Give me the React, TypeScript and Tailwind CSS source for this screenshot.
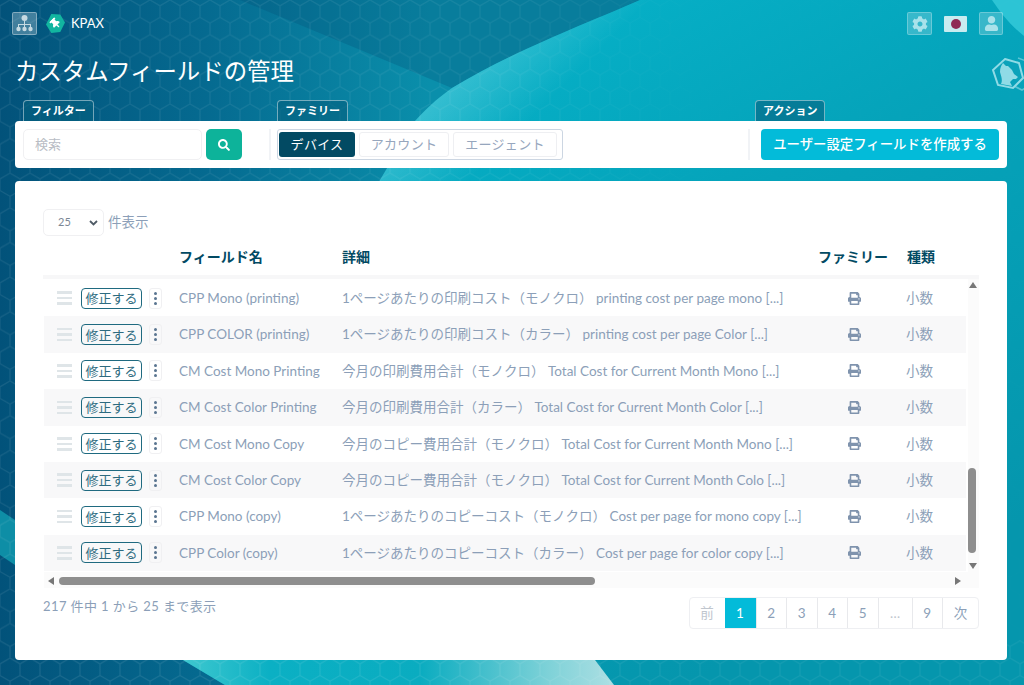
import { FaCog, FaPrint, FaSearch, FaThumbtack, FaUser } from "react-icons/fa"

type Field = {
  name: string
  detail: string
}

const fields: Field[] = [
  { name: "CPP Mono (printing)", detail: "1ページあたりの印刷コスト（モノクロ） printing cost per page mono [...]" },
  { name: "CPP COLOR (printing)", detail: "1ページあたりの印刷コスト（カラー） printing cost per page Color [...]" },
  { name: "CM Cost Mono Printing", detail: "今月の印刷費用合計（モノクロ） Total Cost for Current Month Mono [...]" },
  { name: "CM Cost Color Printing", detail: "今月の印刷費用合計（カラー） Total Cost for Current Month Color [...]" },
  { name: "CM Cost Mono Copy", detail: "今月のコピー費用合計（モノクロ） Total Cost for Current Month Mono [...]" },
  { name: "CM Cost Color Copy", detail: "今月のコピー費用合計（モノクロ） Total Cost for Current Month Colo [...]" },
  { name: "CPP Mono (copy)", detail: "1ページあたりのコピーコスト（モノクロ） Cost per page for mono copy [...]" },
  { name: "CPP Color (copy)", detail: "1ページあたりのコピーコスト（カラー） Cost per page for color copy [...]" },
]

const pages = ["1", "2", "3", "4", "5", "…", "9"]

const curve = "M640 0C590 22 515 50 452 88C435 100 425 110 415 121L380 180L183 660L225 685H1024V0Z"

function Background() {
  return (
    <svg className="absolute inset-0 h-full w-full" viewBox="0 0 1024 685" preserveAspectRatio="none">
      <defs>
        <linearGradient id="base" x1="0" y1="0" x2="1" y2="0">
          <stop offset="0" stopColor="#02527a" />
          <stop offset="0.2" stopColor="#056a90" />
          <stop offset="0.42" stopColor="#0a8fab" />
        </linearGradient>
        <linearGradient id="teal" x1="0" y1="0" x2="0.6" y2="1">
          <stop offset="0" stopColor="#06b9d0" />
          <stop offset="0.5" stopColor="#05a3ba" />
          <stop offset="1" stopColor="#0596ad" />
        </linearGradient>
        <linearGradient id="edge" gradientUnits="userSpaceOnUse" x1="480" y1="50" x2="540" y2="110">
          <stop offset="0" stopColor="#ffffff" stopOpacity="0.2" />
          <stop offset="1" stopColor="#ffffff" stopOpacity="0" />
        </linearGradient>
        <linearGradient id="strip" x1="0" y1="0" x2="1" y2="0">
          <stop offset="0" stopColor="#3fc8cf" />
          <stop offset="0.2" stopColor="#0bb0c4" />
          <stop offset="0.55" stopColor="#0aacc0" />
          <stop offset="0.85" stopColor="#7fd2d8" />
          <stop offset="1" stopColor="#addfe3" />
        </linearGradient>
        <linearGradient id="hexFade" x1="0" y1="0" x2="1" y2="0">
          <stop offset="0" stopColor="#fff" stopOpacity="0.8" />
          <stop offset="0.5" stopColor="#fff" stopOpacity="0.6" />
          <stop offset="0.68" stopColor="#fff" stopOpacity="0.1" />
          <stop offset="1" stopColor="#fff" stopOpacity="0.1" />
        </linearGradient>
        <mask id="hexMask">
          <rect width="1024" height="685" fill="url(#hexFade)" />
          <rect y="640" width="1024" height="45" fill="#fff" fillOpacity="0.6" />
        </mask>
        <pattern id="hex" width="20" height="34.64" patternUnits="userSpaceOnUse">
          <path d="M10 0L20 5.770V17.320L10 23.090L0 17.320V5.770ZM10 23.090V34.640" fill="none" stroke="#ffffff" strokeOpacity="0.1" strokeWidth="1.3" />
        </pattern>
      </defs>
      <rect width="1024" height="685" fill="url(#base)" />
      <path d="M240 0H640C590 22 515 50 452 88Z" fill="#024f75" fillOpacity="0.28" />
      <path d="M0 510L15 520V565L0 555Z" fill="#0e8ea6" />
      <path d={curve} fill="url(#teal)" />
      <path d={curve} fill="url(#edge)" />
      <path d="M183 660L225 685H614L595 660Z" fill="url(#strip)" />
      <path d="M992 0H1024V36C1010 25 1000 12 992 0Z" fill="#2cc4d5" />
      <rect width="1024" height="685" fill="url(#hex)" mask="url(#hexMask)" />

      {/* cat badge, cut off by the window edge */}
      <g fill="none" stroke="#8fdbe6" strokeWidth="1.6">
        <path d="M1018 58L1034 64L1037 82L1022 90L1010 84" strokeOpacity="0.6" />
        <path d="M1005 59L1019 63L1023 78L1013 88L998 85L993 70Z" fill="#0aa2ba" strokeWidth="2" />
      </g>
      <path
        d="M1003 63L1006 66L1008 66L1012 70L1014 74L1018 77L1016 79L1013 79L1010 82L1012 86L1001 84C1003 80 1001 76 1000 72C1000 68 1001 66 1003 63Z"
        fill="#8fdbe6"
      />
    </svg>
  )
}

function GroupLabel({ children }: { children: string }) {
  return (
    <span className="block h-[21px] w-fit rounded-t-[4px] border border-b-0 border-white/45 bg-[#05607f]/60 px-[7px] text-[11px] leading-[20px] font-bold text-white">
      {children}
    </span>
  )
}

function Row({ field, striped }: { field: Field; striped: boolean }) {
  return (
    <div className={`flex h-[36.4px] items-center text-[13.5px] text-[#8c9fb8] ${striped ? "bg-[#f8f8f9]" : "bg-white"}`}>
      <div className="ml-[13px] flex w-[15px] flex-col gap-[3px]">
        <span className="h-[2.5px] bg-[#dfe5e8]" />
        <span className="h-[2.5px] bg-[#dfe5e8]" />
        <span className="h-[2.5px] bg-[#dfe5e8]" />
      </div>
      <button className="ml-[9px] h-[21px] w-[61px] rounded-[4px] border border-[#1f6a80] text-center text-[13px] leading-[18px] text-[#2d6b80]">
        修正する
      </button>
      <span className="ml-[7px] flex h-[21px] w-[13px] flex-col items-center justify-center gap-[2px] rounded-[3px] border border-[#f0f0f2]">
        <i className="size-[3px] rounded-full bg-[#5a7590]" />
        <i className="size-[3px] rounded-full bg-[#5a7590]" />
        <i className="size-[3px] rounded-full bg-[#5a7590]" />
      </span>
      <span className="ml-[17px] w-[163px] whitespace-nowrap">{field.name}</span>
      <span className="w-[465px] whitespace-nowrap">{field.detail}</span>
      <span className="flex w-[94px] justify-center">
        <FaPrint size={13} className="text-[#7f93ad]" />
      </span>
      <span className="ml-[5px]">小数</span>
    </div>
  )
}

export default function App() {
  return (
    <div className="relative h-[685px] w-[1024px] overflow-hidden font-['Lato','Noto_Sans_CJK_JP',sans-serif] text-white">
      <Background />
      <div className="relative flex h-full flex-col px-[15px]">
        <header className="flex h-[47px] items-center">
          <span className="-ml-[3px] flex h-[23px] w-[25px] items-center justify-center rounded-[2px] border border-white/35 bg-white/25">
            <svg width="19" height="19" viewBox="0 0 19 19" fill="#c6dae2">
              <circle cx="9.5" cy="4" r="3" />
              <path d="M9 7h1v3h6v3h-1v-2h-5v2H9v-2H4v2H3v-3h6z" />
              <circle cx="3.5" cy="15" r="2.2" />
              <circle cx="9.5" cy="15" r="2.2" />
              <circle cx="15.5" cy="15" r="2.2" />
            </svg>
          </span>
          <span className="ml-[9px] flex h-[19px] w-[19px] items-center justify-center bg-[#12b5a0] [clip-path:polygon(28%_0,75%_3%,100%_45%,75%_95%,28%_100%,0_55%)]">
            <FaThumbtack size={11} className="-rotate-45 text-white" />
          </span>
          <span className="ml-[6px] text-[13px] text-white">KPAX</span>
          <div className="mr-[6px] ml-auto flex items-center">
            <span className="flex h-[23px] w-[25px] items-center justify-center rounded-[2px] border border-white/25 bg-white/20">
              <FaCog size={16} className="text-[#a9e2ea]" />
            </span>
            <span className="ml-[12px] flex h-[16px] w-[23px] items-center justify-center rounded-[1px] bg-[#c8ecf0]">
              <i className="size-[10px] rounded-full bg-[#8f2b55]" />
            </span>
            <span className="ml-[12px] flex h-[23px] w-[24px] items-center justify-center rounded-[2px] border border-white/25 bg-white/20">
              <FaUser size={15} className="text-[#a9e2ea]" />
            </span>
          </div>
        </header>

        <h1 className="mt-[7px] h-[46px] text-[23.4px] leading-[34px] font-normal">カスタムフィールドの管理</h1>

        <div className="flex">
          <div className="ml-[8px] w-[254px]">
            <GroupLabel>フィルター</GroupLabel>
          </div>
          <div className="w-[478px]">
            <GroupLabel>ファミリー</GroupLabel>
          </div>
          <GroupLabel>アクション</GroupLabel>
        </div>

        <section className="flex h-[47px] w-[992px] items-center rounded-[4px] bg-white px-[8px]">
          <div className="flex h-[31px] w-[179px] items-center rounded-[5px] border border-[#f0f0f2] pl-[11px] text-[13px] text-[#b8bcc4]">検索</div>
          <button className="ml-[4px] flex h-[31px] w-[36px] items-center justify-center rounded-[5px] bg-[#0db39a]">
            <FaSearch size={12} className="text-white" />
          </button>
          <span className="ml-[27px] h-[31px] w-[2px] bg-[#f1f3f6]" />
          <div className="ml-[6px] flex h-[31px] items-center gap-[4px] rounded-[3px] border border-[#ccd6e2] pr-[5px] pl-[1px] text-[13px] tracking-[0.3px]">
            <span className="flex h-[25px] w-[76px] items-center justify-center rounded-[3px] bg-[#024a63] text-white">デバイス</span>
            <span className="flex h-[25px] w-[90px] items-center justify-center rounded-[3px] border border-[#eeeff2] text-[#96a6bd]">アカウント</span>
            <span className="flex h-[25px] w-[104px] items-center justify-center rounded-[3px] border border-[#eeeff2] text-[#96a6bd]">エージェント</span>
          </div>
          <span className="ml-[185px] h-[31px] w-[2px] bg-[#f1f3f6]" />
          <button className="ml-[11px] h-[31px] w-[238px] rounded-[4px] bg-[#03bbd9] text-[13.4px] font-medium text-white">
            ユーザー設定フィールドを作成する
          </button>
        </section>

        <main className="mt-[13px] h-[479px] w-[992px] rounded-[4px] bg-white px-[28px] pt-[28px]">
          <div className="flex items-center gap-[4px] text-[13.5px] text-[#8c9fb8]">
            <div className="flex h-[27px] w-[61px] items-center justify-between rounded-[5px] border border-[#f0f0f2] pr-[5px] pl-[14px] text-[11px] text-[#7b8794]">
              25
              <svg width="9" height="6" viewBox="0 0 9 6" fill="none" stroke="#4f5b66" strokeWidth="1.8">
                <path d="M1 1l3.500 3.500L8 1" />
              </svg>
            </div>
            件表示
          </div>

          <div className="relative mt-[5px] w-[936px]">
            <div className="flex h-[38px] items-center border-b-[4px] border-[#f7f7f8] pb-[4px] text-[14px] font-bold text-[#024a63]">
              <span className="ml-[136px] w-[163px]">フィールド名</span>
              <span className="w-[476px]">詳細</span>
              <span className="w-[89px]">ファミリー</span>
              <span>種類</span>
            </div>

            <div className="mt-[1px] ml-px h-[292px] w-[922px] overflow-hidden">
              {fields.map((field, i) => (
                <Row key={field.name} field={field} striped={i % 2 === 1} />
              ))}
            </div>

            {/* fake scrollbars */}
            <div className="absolute top-[38px] right-0 h-[309px] w-[11px] bg-[#fbfbfb]">
              <span className="absolute top-[3px] left-[1px] h-0 w-0 border-x-[4px] border-b-[6px] border-x-transparent border-b-[#777]" />
              <span className="absolute top-[189px] left-0 h-[85px] w-[8px] rounded-full bg-[#8e8e8e]" />
              <span className="absolute top-[284px] left-[1px] h-0 w-0 border-x-[4px] border-t-[6px] border-x-transparent border-t-[#777]" />
            </div>
            <div className="relative ml-px h-[16px] w-[924px] bg-[#fbfbfb]">
              <span className="absolute top-[5px] left-[4px] h-0 w-0 border-y-[4px] border-r-[6px] border-y-transparent border-r-[#777]" />
              <span className="absolute top-[5px] left-[15px] h-[8px] w-[536px] rounded-full bg-[#8e8e8e]" />
              <span className="absolute top-[5px] left-[911px] h-0 w-0 border-y-[4px] border-l-[6px] border-y-transparent border-l-[#777]" />
            </div>
          </div>

          <div className="mt-[9px] flex w-[936px] items-start justify-between">
            <span className="text-[13px] tracking-[0.4px] text-[#8c9fb8]">217 件中 1 から 25 まで表示</span>
            <nav className="flex h-[32px] overflow-hidden rounded-[4px] border border-[#eeeff2] text-[13.500px] text-[#8c9fb8]">
              <span className="flex w-[35px] items-center justify-center text-[#c0c6ce]">前</span>
              {pages.map((page) => (
                <span
                  key={page}
                  className={`flex items-center justify-center border-l border-[#e8e9ec] ${
                    page === "1" ? "w-[31px] border-l-0 bg-[#03bbd9] text-white" : page === "…" ? "w-[34px] text-[#c0c6ce]" : "w-[30.500px]"
                  }`}
                >
                  {page}
                </span>
              ))}
              <span className="flex w-[36px] items-center justify-center border-l border-[#e8e9ec]">次</span>
            </nav>
          </div>
        </main>
      </div>
    </div>
  )
}
